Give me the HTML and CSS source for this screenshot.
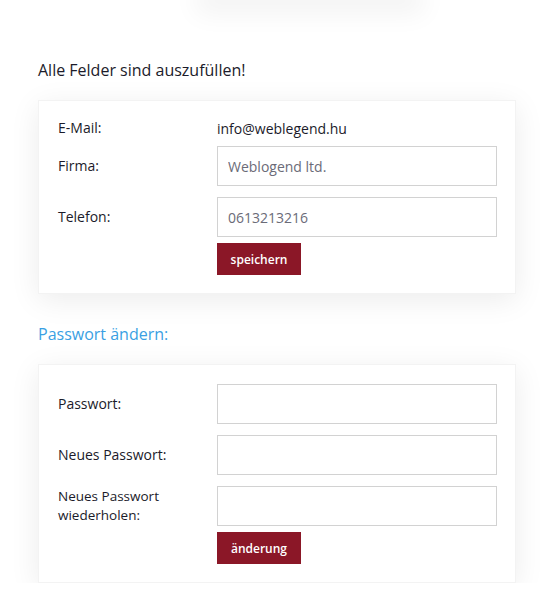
FILE: index.html
```html
<!DOCTYPE html>
<html lang="de">
<head>
<meta charset="utf-8">
<title>Profil</title>
<link rel="stylesheet" href="styles.css">
</head>
<body>
<div class="top-glow"></div>
<main class="page">
  <h2 class="heading">Alle Felder sind auszufüllen!</h2>
  <section class="card">
    <div class="row row-text">
      <span class="label">E-Mail:</span>
      <span class="value">info@weblegend.hu</span>
    </div>
    <div class="row">
      <label class="label">Firma:</label>
      <input class="field" type="text" value="Weblogend ltd.">
    </div>
    <div class="row">
      <label class="label">Telefon:</label>
      <input class="field" type="text" value="0613213216">
    </div>
    <div class="row row-btn">
      <span class="label"></span>
      <button class="btn">speichern</button>
    </div>
  </section>

  <h2 class="heading heading-blue">Passwort ändern:</h2>
  <section class="card card-pw">
    <div class="row">
      <label class="label">Passwort:</label>
      <input class="field" type="password">
    </div>
    <div class="row">
      <label class="label">Neues Passwort:</label>
      <input class="field" type="password">
    </div>
    <div class="row">
      <label class="label label-two">Neues Passwort<br>wiederholen:</label>
      <input class="field" type="password">
    </div>
    <div class="row row-btn">
      <span class="label"></span>
      <button class="btn">änderung</button>
    </div>
  </section>
</main>
</body>
</html>
```

FILE: styles.css
```css
html, body {
  margin: 0;
  padding: 0;
  background: #ffffff;
}
body {
  font-family: "Open Sans", "DejaVu Sans", sans-serif;
  color: #1b1b2a;
  overflow: hidden;
}
.top-glow {
  width: 200px;
  height: 0;
  margin: 0 auto 0 210px;
  box-shadow: 0 0 26px 14px rgba(0, 0, 0, 0.05);
}
.page {
  padding: 0 25px 0 38px;
}
.heading {
  margin: 58px 0 18px;
  font-size: 16px;
  font-weight: 400;
  line-height: 24px;
  color: #1b1b2a;
}
.heading-blue {
  margin-top: 28px;
  color: #3a9fe3;
}
.card {
  width: 478px;
  box-sizing: border-box;
  background: #fff;
  border: 1px solid #f3f3f3;
  box-shadow: 0 6px 28px rgba(0, 0, 0, 0.08);
  padding: 17px 18px 18px 19px;
}
.card-pw {
  padding-top: 19px;
}
.row {
  display: flex;
  align-items: center;
  margin-bottom: 11px;
}
.row-text {
  height: 20px;
  margin-bottom: 8px;
}
.row-btn {
  margin-top: -5px;
  margin-bottom: 0;
}
.label {
  width: 159px;
  flex: none;
  font-size: 14px;
  line-height: 16px;
  color: #1b1b2a;
}
.label-two {
  font-size: 13.5px;
  line-height: 19px;
}
.value {
  font-size: 14px;
  color: #1b1b2a;
}
.field {
  width: 280px;
  height: 40px;
  flex: none;
  box-sizing: border-box;
  border: 1px solid #d2d2d2;
  background: #fff;
  padding: 0 10px;
  font-family: inherit;
  font-size: 14px;
  color: #6b6b78;
  outline: none;
}
.btn {
  width: 84px;
  height: 32px;
  border: 0;
  background: #8b1727;
  color: #fff;
  font-family: inherit;
  font-size: 12px;
  font-weight: 600;
  padding: 0;
  cursor: pointer;
}
```
